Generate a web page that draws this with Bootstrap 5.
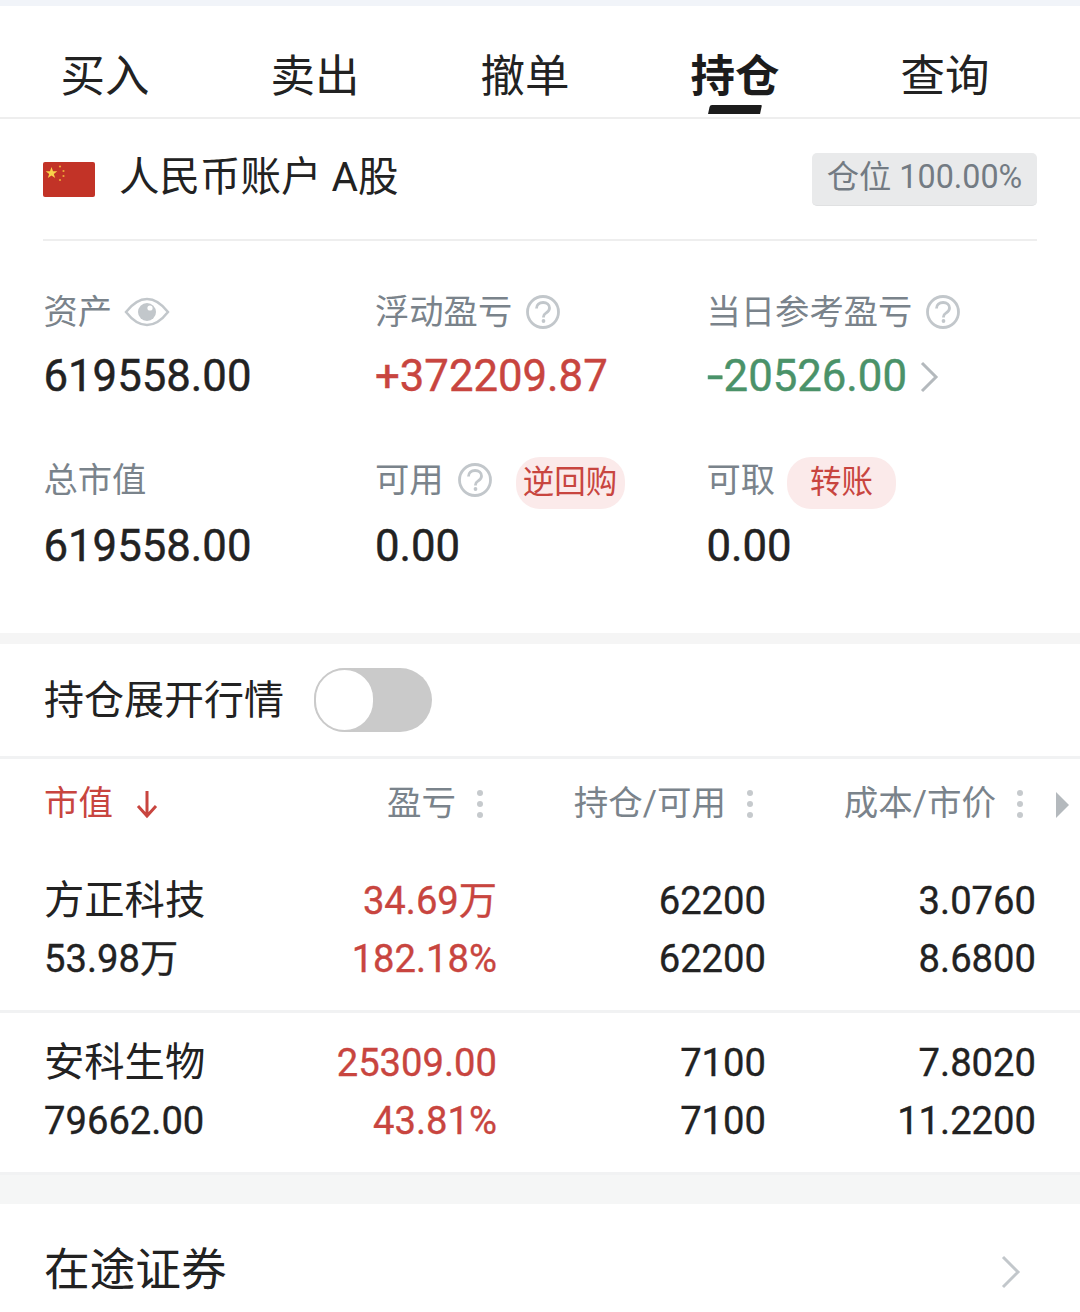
<!DOCTYPE html>
<html lang="zh">
<head>
<meta charset="utf-8">
<title>持仓</title>
<link href="https://cdn.jsdelivr.net/npm/bootstrap@5.3.0/dist/css/bootstrap.min.css" rel="stylesheet">
<style>
html,body{background:#fff;}
body{font-family:Roboto,"Noto Sans CJK SC",sans-serif;color:#222;width:1080px;height:1312px;overflow:hidden;}
.top-strip{height:6px;background:#f1f4f9;}
.tabs-bar{height:113px;border-bottom:2px solid #eeeeee;}
.tab-item{width:210px;height:111px;font-size:44.5px;line-height:1;padding-top:49px;position:relative;color:#222;text-align:center;}
.tab-active{font-weight:700;color:#1c1c1c;}
.tab-active::after{content:"";position:absolute;left:79px;top:99px;width:52px;height:9px;background:#1c1c1c;transform:skewX(-12deg);border-radius:2px 1px 0 0;}
.acct-row{height:122px;margin:0 43px 0 43px;border-bottom:2px solid #eeeeee;}
.acct-name{font-size:40.5px;line-height:1;color:#222;margin-left:24px;margin-top:-3px;}
.flag{width:52px;height:35px;display:block;margin-top:1px;}
.pos-badge{width:225px;height:53px;background:#e9eaeb;border-radius:5px;font-size:32.3px;color:#737b83;line-height:1;padding-top:8px;text-align:center;border-bottom:1px solid #e0e1e2;}
.stats{height:392px;padding:0 0 0 43.5px;}
.stat-col{width:331.5px;}
.stat-label{font-size:34.3px;line-height:1;height:40px;color:#7a838b;}
.stat-value{font-size:43.7px;-webkit-text-stroke:.45px currentColor;line-height:1;margin-top:23px;height:44px;color:#222;}
.stat-row-a{padding-top:51px;height:210px;}
.stat-row-b{height:170px;padding-top:9px;}
.stat-row-b .stat-value{margin-top:25px;}
.up{color:#c8453f;}
.down{color:#4a9269;}
.ico-gap{margin-left:13px;}
.eye-gap{margin-left:12px;}
.pill{background:#fbeaea;color:#c8453f;border-radius:24px;height:52px;width:109px;font-size:31.5px;line-height:1;margin:-3px 0 -9px 23px;}
.pill-b{margin-left:12px;}
.chev{margin-left:12px;}
.minus-sign{display:inline-block;transform:scaleX(1.35);transform-origin:left center;margin-right:5px;}
.gap-band{height:11px;background:#f5f5f5;}
.toggle-row{height:115px;padding:0 0 0 44px;border-bottom:3px solid #f1f2f3;}
.toggle-label{font-size:40px;line-height:1;color:#222;margin-top:2px;}
.fake-switch{width:118px;height:64px;background:#cacaca;border-radius:32px;margin-left:30px;position:relative;}
.fake-switch::before{content:"";position:absolute;left:0;top:0;width:61px;height:64px;background:#fff;border:2.5px solid #cacaca;border-radius:32px;}
.head-row{height:85px;padding:4px 0 0 44px;font-size:34.5px;line-height:1;color:#7a838b;position:relative;}
.hc-1{width:286px;}
.hc-2{width:153px;justify-content:flex-end;}
.hc-3{width:270px;justify-content:flex-end;}
.hc-4{width:270px;justify-content:flex-end;}
.dots{display:block;margin-left:21px;}
.sort-arrow{margin-left:23px;}
.more-tri{position:absolute;left:1056px;top:33px;}
.data-row{padding:0 44px;height:159px;font-size:38.2px;-webkit-text-stroke:.35px currentColor;line-height:1;color:#222;}
.data-first{height:166px;padding-top:28px;}
.data-second{padding-top:21px;}
.data-col{display:flex;flex-direction:column;}
.line-gap{height:58px;display:flex;align-items:center;}
.dc-1{width:280px;}
.dc-2{width:173px;align-items:flex-end;}
.dc-3{width:269px;align-items:flex-end;}
.dc-4{width:270px;align-items:flex-end;}
.cn-name{font-size:40.3px;-webkit-text-stroke:0;}
.row-sep{height:3px;background:#f1f2f3;}
.band-big{height:29px;background:#f5f6f6;}
.transit{height:134px;padding:0 59px 0 44px;font-size:45.7px;line-height:1;color:#222;}
.transit svg{margin-top:2px;}
</style>
</head>
<body>
<div class="top-strip"></div>
<div class="tabs-bar d-flex">
  <div class="tab-item">买入</div>
  <div class="tab-item">卖出</div>
  <div class="tab-item">撤单</div>
  <div class="tab-item tab-active">持仓</div>
  <div class="tab-item">查询</div>
</div>
<div class="acct-row d-flex align-items-center justify-content-between">
  <div class="d-flex align-items-center">
    <svg class="flag" viewBox="0 0 52 35"><rect width="52" height="35" rx="2" fill="#c23327"/><polygon points="8.500,5 10,9.200 14.300,9.200 10.800,11.900 12.200,16 8.500,13.500 4.800,16 6.200,11.900 2.700,9.200 7,9.200" fill="#f8d24a"/><circle cx="17" cy="4.500" r="1.100" fill="#eda93a"/><circle cx="20.500" cy="9" r="1.100" fill="#eda93a"/><circle cx="20.500" cy="14" r="1.100" fill="#eda93a"/><circle cx="17" cy="18" r="1.100" fill="#eda93a"/></svg>
    <div class="acct-name">人民币账户 A股</div>
  </div>
  <div class="pos-badge">仓位 100.00%</div>
</div>
<div class="stats">
  <div class="stat-row-a d-flex">
    <div class="stat-col">
      <div class="stat-label d-flex align-items-center">资产
        <svg class="eye-gap" width="46" height="32" viewBox="0 0 46 32"><path d="M2 16C9 7 16 3 23 3s14 4 21 13c-7 9-14 13-21 13S9 25 2 16z" fill="none" stroke="#c2c7cb" stroke-width="2.500"/><circle cx="23" cy="16" r="9" fill="#c2c7cb"/><circle cx="26" cy="12" r="2.600" fill="#fff"/></svg>
      </div>
      <div class="stat-value">619558.00</div>
    </div>
    <div class="stat-col">
      <div class="stat-label d-flex align-items-center">浮动盈亏
        <svg class="ico-gap" width="36" height="36" viewBox="0 0 36 36"><circle cx="18" cy="18" r="15.500" fill="none" stroke="#c2c7cb" stroke-width="2.800"/><path d="M11.500 14.500c0-3.800 2.800-6 6.600-6s6.400 2.300 6.400 5.400c0 2.500-1.500 3.700-3.300 5-1.700 1.100-2.700 2-2.700 3.800v.8" fill="none" stroke="#c2c7cb" stroke-width="2.800"/><circle cx="18.500" cy="27" r="1.900" fill="#c2c7cb"/></svg>
      </div>
      <div class="stat-value up">+372209.87</div>
    </div>
    <div class="stat-col">
      <div class="stat-label d-flex align-items-center">当日参考盈亏
        <svg class="ico-gap" width="36" height="36" viewBox="0 0 36 36"><circle cx="18" cy="18" r="15.500" fill="none" stroke="#c2c7cb" stroke-width="2.800"/><path d="M11.500 14.500c0-3.800 2.800-6 6.600-6s6.400 2.300 6.400 5.400c0 2.500-1.500 3.700-3.300 5-1.700 1.100-2.700 2-2.700 3.800v.8" fill="none" stroke="#c2c7cb" stroke-width="2.800"/><circle cx="18.500" cy="27" r="1.900" fill="#c2c7cb"/></svg>
      </div>
      <div class="stat-value down d-flex align-items-center"><span class="minus-sign">-</span>20526.00
        <svg class="chev" width="20" height="32" viewBox="0 0 20 32"><path d="M3 2l14 14L3 30" fill="none" stroke="#b4b9bd" stroke-width="3"/></svg>
      </div>
    </div>
  </div>
  <div class="stat-row-b d-flex">
    <div class="stat-col">
      <div class="stat-label d-flex align-items-center">总市值</div>
      <div class="stat-value">619558.00</div>
    </div>
    <div class="stat-col">
      <div class="stat-label d-flex align-items-center">可用
        <svg class="ico-gap" width="36" height="36" viewBox="0 0 36 36"><circle cx="18" cy="18" r="15.500" fill="none" stroke="#c2c7cb" stroke-width="2.800"/><path d="M11.500 14.500c0-3.800 2.800-6 6.600-6s6.400 2.300 6.400 5.400c0 2.500-1.500 3.700-3.300 5-1.700 1.100-2.700 2-2.700 3.800v.8" fill="none" stroke="#c2c7cb" stroke-width="2.800"/><circle cx="18.500" cy="27" r="1.900" fill="#c2c7cb"/></svg>
        <span class="pill d-flex align-items-center justify-content-center">逆回购</span>
      </div>
      <div class="stat-value">0.00</div>
    </div>
    <div class="stat-col">
      <div class="stat-label d-flex align-items-center">可取
        <span class="pill pill-b d-flex align-items-center justify-content-center">转账</span>
      </div>
      <div class="stat-value">0.00</div>
    </div>
  </div>
</div>
<div class="gap-band"></div>
<div class="toggle-row d-flex align-items-center">
  <div class="toggle-label">持仓展开行情</div>
  <div class="fake-switch"></div>
</div>
<div class="head-row d-flex align-items-center">
  <div class="hc-1 d-flex align-items-center up">市值
    <svg class="sort-arrow" width="22" height="30" viewBox="0 0 22 30"><path d="M11 2v25M2 17l9 10 9-10" fill="none" stroke="#c8453f" stroke-width="3"/></svg>
  </div>
  <div class="hc-2 d-flex align-items-center">盈亏
    <svg class="dots" width="6" height="28" viewBox="0 0 6 28"><circle cx="3" cy="3" r="3" fill="#c6cacd"/><circle cx="3" cy="14" r="3" fill="#c6cacd"/><circle cx="3" cy="25" r="3" fill="#c6cacd"/></svg>
  </div>
  <div class="hc-3 d-flex align-items-center">持仓/可用
    <svg class="dots" width="6" height="28" viewBox="0 0 6 28"><circle cx="3" cy="3" r="3" fill="#c6cacd"/><circle cx="3" cy="14" r="3" fill="#c6cacd"/><circle cx="3" cy="25" r="3" fill="#c6cacd"/></svg>
  </div>
  <div class="hc-4 d-flex align-items-center">成本/市价
    <svg class="dots" width="6" height="28" viewBox="0 0 6 28"><circle cx="3" cy="3" r="3" fill="#c6cacd"/><circle cx="3" cy="14" r="3" fill="#c6cacd"/><circle cx="3" cy="25" r="3" fill="#c6cacd"/></svg>
  </div>
  <svg class="more-tri" width="13" height="26" viewBox="0 0 13 26"><path d="M0 0l13 13L0 26z" fill="#b4b9bd"/></svg>
</div>
<div class="data-row data-first d-flex">
  <div class="data-col dc-1"><div class="line-gap cn-name">方正科技</div><div class="line-gap">53.98万</div></div>
  <div class="data-col dc-2 up"><div class="line-gap">34.69万</div><div class="line-gap">182.18%</div></div>
  <div class="data-col dc-3"><div class="line-gap">62200</div><div class="line-gap">62200</div></div>
  <div class="data-col dc-4"><div class="line-gap">3.0760</div><div class="line-gap">8.6800</div></div>
</div>
<div class="row-sep"></div>
<div class="data-row data-second d-flex">
  <div class="data-col dc-1"><div class="line-gap cn-name">安科生物</div><div class="line-gap">79662.00</div></div>
  <div class="data-col dc-2 up"><div class="line-gap">25309.00</div><div class="line-gap">43.81%</div></div>
  <div class="data-col dc-3"><div class="line-gap">7100</div><div class="line-gap">7100</div></div>
  <div class="data-col dc-4"><div class="line-gap">7.8020</div><div class="line-gap">11.2200</div></div>
</div>
<div class="row-sep"></div>
<div class="band-big"></div>
<div class="transit d-flex align-items-center justify-content-between">
  <span>在途证券</span>
  <svg width="20" height="34" viewBox="0 0 20 34"><path d="M2 2l15 15L2 32" fill="none" stroke="#c2c7cb" stroke-width="3"/></svg>
</div>
</body>
</html>
